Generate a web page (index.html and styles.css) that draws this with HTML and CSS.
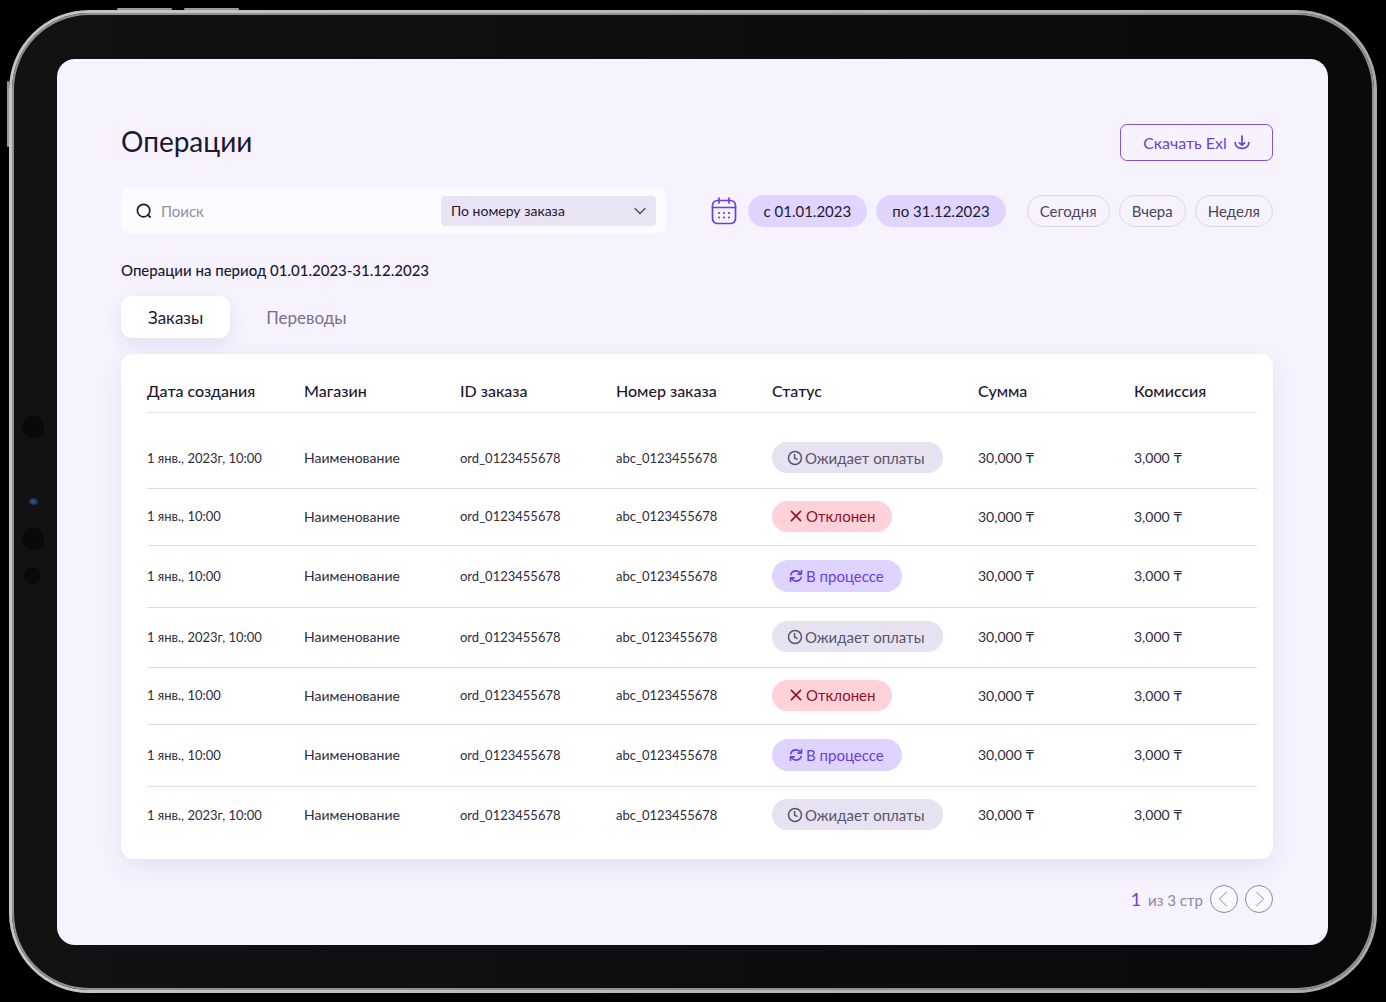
FILE: index.html
```html
<!DOCTYPE html>
<html lang="ru">
<head>
<meta charset="utf-8">
<meta name="viewport" content="width=device-width, initial-scale=1">
<title>Операции</title>
<link rel="stylesheet" href="styles.css">
</head>
<body>
<svg width="0" height="0" class="sprite" aria-hidden="true">
  <symbol id="i-clock" viewBox="0 0 16 16"><circle cx="8" cy="8" r="6.5" fill="none" stroke="currentColor" stroke-width="1.5"/><path d="M7.600 4v4.200l3 1.400" fill="none" stroke="currentColor" stroke-width="1.5"/></symbol>
  <symbol id="i-cross" viewBox="0 0 14 14"><path d="M2.4 2.4l9.2 9.2M11.6 2.4l-9.2 9.2" fill="none" stroke="currentColor" stroke-width="1.6" stroke-linecap="round"/></symbol>
  <symbol id="i-sync" viewBox="0 0 14 14"><path d="M1.800 5.800C2.600 3 4.800 1.900 7.200 1.900c1.900 0 3.300.9 4.600 2.700M12.200 8.200c-.8 2.800-3 3.900-5.400 3.900-1.900 0-3.300-.9-4.600-2.700M12.500 1.500v3.600H8.900M1.500 12.500V8.900h3.600" fill="none" stroke="currentColor" stroke-width="1.6" stroke-linecap="round" stroke-linejoin="round"/></symbol>
</svg>
<div class="device">
  <span class="key key-a"></span><span class="key key-b"></span><span class="key key-side"></span>
  <span class="sensor sensor-a"></span><span class="sensor sensor-b"></span><span class="sensor sensor-c"></span><span class="lens"></span>
  <main class="screen">
    <header class="head">
      <h1>Операции</h1>
      <button class="download" type="button">Скачать Exl
        <svg width="16" height="16" viewBox="0 0 16 16" fill="none" stroke="currentColor" stroke-width="1.7" stroke-linecap="round" stroke-linejoin="round" aria-hidden="true"><path d="M8 1v9M5.400 7.800L8 10.200l2.600-2.400M1.200 7.600c0 3.600 2.600 5.800 6.800 5.800s6.800-2.200 6.800-5.800"/></svg>
      </button>
    </header>

    <div class="toolbar">
      <form class="search">
        <label class="query">
          <svg width="16" height="16" viewBox="0 0 16 16" fill="none" stroke="currentColor" stroke-width="1.7" stroke-linecap="round" aria-hidden="true"><circle cx="7.600" cy="7.600" r="6.200"/><path d="M11.800 11.800l2.400 2.200"/></svg>
          <input type="search" placeholder="Поиск" aria-label="Поиск">
        </label>
        <div class="field">
          <select aria-label="Поле поиска"><option>По номеру заказа</option></select>
          <svg width="12" height="8" viewBox="0 0 12 8" fill="none" stroke="currentColor" stroke-width="1.500" stroke-linecap="round" stroke-linejoin="round" aria-hidden="true"><path d="M1 1.500l5 5 5-5"/></svg>
        </div>
      </form>
      <div class="filters">
        <svg width="26" height="28" viewBox="0 0 26 28" fill="none" stroke="#6a3fe0" stroke-width="1.700" stroke-linecap="round" aria-hidden="true"><rect x="1.500" y="3.500" width="23" height="23" rx="5"/><path d="M1.500 10.500h23M8 1v5M18 1v5"/><path stroke-width="2.200" d="M8 16h.01M13 16h.01M18 16h.01M8 20.500h.01M13 20.500h.01M18 20.500h.01"/></svg>
        <button class="date" type="button">с 01.01.2023</button>
        <button class="date" type="button">по 31.12.2023</button>
        <button class="preset first" type="button">Сегодня</button>
        <button class="preset" type="button">Вчера</button>
        <button class="preset" type="button">Неделя</button>
      </div>
    </div>

    <h2>Операции на период 01.01.2023-31.12.2023</h2>

    <nav class="tabs">
      <button class="tab active" type="button">Заказы</button>
      <button class="tab" type="button">Переводы</button>
    </nav>

    <section class="card">
      <table>
        <thead>
          <tr><th class="c-date">Дата создания</th><th class="c-mid">Магазин</th><th class="c-mid">ID заказа</th><th class="c-mid">Номер заказа</th><th class="c-status">Статус</th><th class="c-mid">Сумма</th><th>Комиссия</th></tr>
        </thead>
        <tbody>
          <tr class="r-wait"><td class="num">1 янв., 2023г, 10:00</td><td>Наименование</td><td class="num">ord_0123455678</td><td class="num">abc_0123455678</td><td><span class="status wait"><svg width="16" height="16"><use href="#i-clock"/></svg>Ожидает оплаты</span></td><td>30,000 ₸</td><td>3,000 ₸</td></tr>
          <tr class="r-no"><td class="num">1 янв., 10:00</td><td>Наименование</td><td class="num">ord_0123455678</td><td class="num">abc_0123455678</td><td><span class="status no"><svg width="14" height="14"><use href="#i-cross"/></svg>Отклонен</span></td><td>30,000 ₸</td><td>3,000 ₸</td></tr>
          <tr class="r-run"><td class="num">1 янв., 10:00</td><td>Наименование</td><td class="num">ord_0123455678</td><td class="num">abc_0123455678</td><td><span class="status run"><svg width="14" height="14"><use href="#i-sync"/></svg>В процессе</span></td><td>30,000 ₸</td><td>3,000 ₸</td></tr>
          <tr class="r-wait"><td class="num">1 янв., 2023г, 10:00</td><td>Наименование</td><td class="num">ord_0123455678</td><td class="num">abc_0123455678</td><td><span class="status wait"><svg width="16" height="16"><use href="#i-clock"/></svg>Ожидает оплаты</span></td><td>30,000 ₸</td><td>3,000 ₸</td></tr>
          <tr class="r-no"><td class="num">1 янв., 10:00</td><td>Наименование</td><td class="num">ord_0123455678</td><td class="num">abc_0123455678</td><td><span class="status no"><svg width="14" height="14"><use href="#i-cross"/></svg>Отклонен</span></td><td>30,000 ₸</td><td>3,000 ₸</td></tr>
          <tr class="r-run"><td class="num">1 янв., 10:00</td><td>Наименование</td><td class="num">ord_0123455678</td><td class="num">abc_0123455678</td><td><span class="status run"><svg width="14" height="14"><use href="#i-sync"/></svg>В процессе</span></td><td>30,000 ₸</td><td>3,000 ₸</td></tr>
          <tr class="r-wait"><td class="num">1 янв., 2023г, 10:00</td><td>Наименование</td><td class="num">ord_0123455678</td><td class="num">abc_0123455678</td><td><span class="status wait"><svg width="16" height="16"><use href="#i-clock"/></svg>Ожидает оплаты</span></td><td>30,000 ₸</td><td>3,000 ₸</td></tr>
        </tbody>
      </table>
    </section>

    <footer class="pager">
      <p><b>1</b> из 3 стр</p>
      <button type="button" aria-label="Назад"><svg width="26" height="26" viewBox="1 1 26 26" fill="none" stroke="currentColor" stroke-linecap="round" stroke-linejoin="round"><path d="M16.500 7l-7 7 7 7"/></svg></button>
      <button type="button" aria-label="Вперёд"><svg width="26" height="26" viewBox="1 1 26 26" fill="none" stroke="currentColor" stroke-linecap="round" stroke-linejoin="round"><path d="M11.500 7l7 7-7 7"/></svg></button>
    </footer>
  </main>
</div>
</body>
</html>
```
FILE: styles.css
```css
* { box-sizing: border-box; }
body {
  margin: 0;
  min-height: 100vh;
  padding: 10px 9px 9px;
  display: flex;
  background: #000;
  color: #1c1830;
  font-family: Lato, "Noto Sans", sans-serif;
  font-size: 14px;
}
button, input, select { font: inherit; color: inherit; margin: 0; }
button { cursor: pointer; }
h1, h2, p { margin: 0; }
.sprite { position: absolute; }

/* Tablet body */
.device {
  position: relative;
  flex: 1;
  display: flex;
  padding: 46px 46px 45px 45px;
  border: 3px solid transparent;
  border-radius: 80px;
  background:
    linear-gradient(90deg, #121212, #0a0a0a) padding-box,
    linear-gradient(90deg, #c6c6c6, #aaa) border-box;
  box-shadow: inset 0 0 0 2px #909090;
}
.key { position: absolute; background: #999; border-radius: 2px; }
.key-a, .key-b { top: -5px; width: 55px; height: 2px; }
.key-a { left: 105px; }
.key-b { left: 172px; }
.key-side { left: -5px; top: 68px; width: 2px; height: 66px; }
.sensor { position: absolute; border-radius: 50%; background: #090909; }
.sensor-a { left: 10px; top: 403px; width: 22px; height: 22px; }
.sensor-b { left: 10px; top: 515px; width: 22px; height: 22px; }
.sensor-c { left: 12px; top: 554px; width: 17px; height: 17px; }
.lens { position: absolute; left: 17px; top: 485px; width: 9px; height: 7px; border-radius: 50%; background: radial-gradient(#2d5a9e, #0b1830); }

.screen {
  flex: 1;
  min-width: 0;
  padding: 65px 55px 30px 64px;
  border-radius: 18px;
  background: #f6f3ff;
}

.head { display: flex; justify-content: space-between; align-items: flex-start; }
h1 { font-size: 28px; line-height: 34px; font-weight: 400; }
.download {
  display: flex;
  align-items: center;
  justify-content: center;
  gap: 7px;
  width: 153px;
  height: 37px;
  padding: 0;
  border: 1px solid #7c55e0;
  border-radius: 7px;
  background: none;
  color: #6a3fe0;
  font-size: 16px;
  font-weight: 400;
}

.toolbar { display: flex; justify-content: space-between; align-items: center; margin-top: 27px; }
.search {
  display: flex;
  align-items: center;
  flex: 0 1 545px;
  height: 45px;
  padding: 0 10px 0 15px;
  border-radius: 6px;
  background: #fcfbff;
}
.query { flex: 1; display: flex; align-items: center; gap: 9px; }
.query input { flex: 1; min-width: 0; padding: 0; border: 0; outline: 0; background: none; font-size: 15px; }
.query input::placeholder { color: #9490a3; opacity: 1; }
.field { display: grid; width: 215px; align-items: center; }
.field select, .field svg { grid-area: 1 / 1; }
.field svg { justify-self: end; margin-right: 10px; color: #5b556b; pointer-events: none; }
.field select {
  appearance: none;
  width: 100%;
  height: 30px;
  padding: 0 10px;
  border: 0;
  border-radius: 4px;
  background: #e8e4f4;
}
.filters { display: flex; align-items: center; gap: 9px; }
.filters svg { margin-right: 2px; }
.date, .preset { height: 32px; border-radius: 16px; font-size: 15px; white-space: nowrap; }
.date { padding: 0 16px; border: 0; background: #dfd5ff; }
.preset { padding: 0 12px; border: 1px solid #dcd8e6; background: none; color: #4a4559; }
.preset.first { margin-left: 12px; }

h2 { margin-top: 26px; font-size: 15px; line-height: 22px; font-weight: 500; }

.tabs { display: flex; gap: 9px; margin-top: 15px; }
.tab { height: 42px; padding: 0 27px; border: 0; border-radius: 10px; background: none; color: #777186; font-size: 17px; }
.tab.active { background: #fff; color: #1c1830; box-shadow: 0 6px 16px #5a46a01f; }

.card {
  margin-top: 16px;
  padding: 16px 16px 13px 26px;
  border-radius: 12px;
  background: #fff;
  box-shadow: 0 8px 24px #5a46a01c;
}
table { width: 100%; border-collapse: separate; border-spacing: 0; table-layout: fixed; }
th, td { padding: 0 0 2px; text-align: left; border-bottom: 1px solid #dddaec; white-space: nowrap; }
th { height: 43px; font-size: 16px; font-weight: 500; border-color: #e4e3e8; }
.c-date { width: 157px; }
.c-mid { width: 156px; }
.c-status { width: 206px; }
td { color: #302c3c; }
.num { font-size: 13px; }
.r-wait { height: 60px; }
.r-no { height: 57px; }
.r-run { height: 62px; }
tbody tr:first-child { height: 76px; }
tbody tr:first-child td { padding-top: 16px; }
tbody tr:last-child { height: 59px; }
tbody tr:last-child td { border-bottom: 0; padding-bottom: 4px; }

.status { display: inline-flex; align-items: center; gap: 3px; height: 31px; border-radius: 16px; font-size: 15px; vertical-align: middle; }
.wait { padding: 0 18px 0 15px; gap: 2px; background: #e6e2f2; color: #5a5468; }
.no { padding: 0 17px; background: #ffd2da; color: #8c1226; }
.run { padding: 0 18px 0 17px; height: 32px; background: #ded4ff; color: #6a3fe0; }

.pager { display: flex; justify-content: flex-end; align-items: center; gap: 7px; margin-top: 26px; }
.pager p { color: #8e899c; font-size: 15px; }
.pager b { margin-right: 3px; color: #6a3fe0; font-size: 18px; font-weight: 400; }
.pager button {
  width: 28px;
  height: 28px;
  padding: 0;
  display: grid;
  place-items: center;
  border: 1px solid #8e899c;
  border-radius: 50%;
  background: #faf8ff;
  color: #8e899c;
}
```
